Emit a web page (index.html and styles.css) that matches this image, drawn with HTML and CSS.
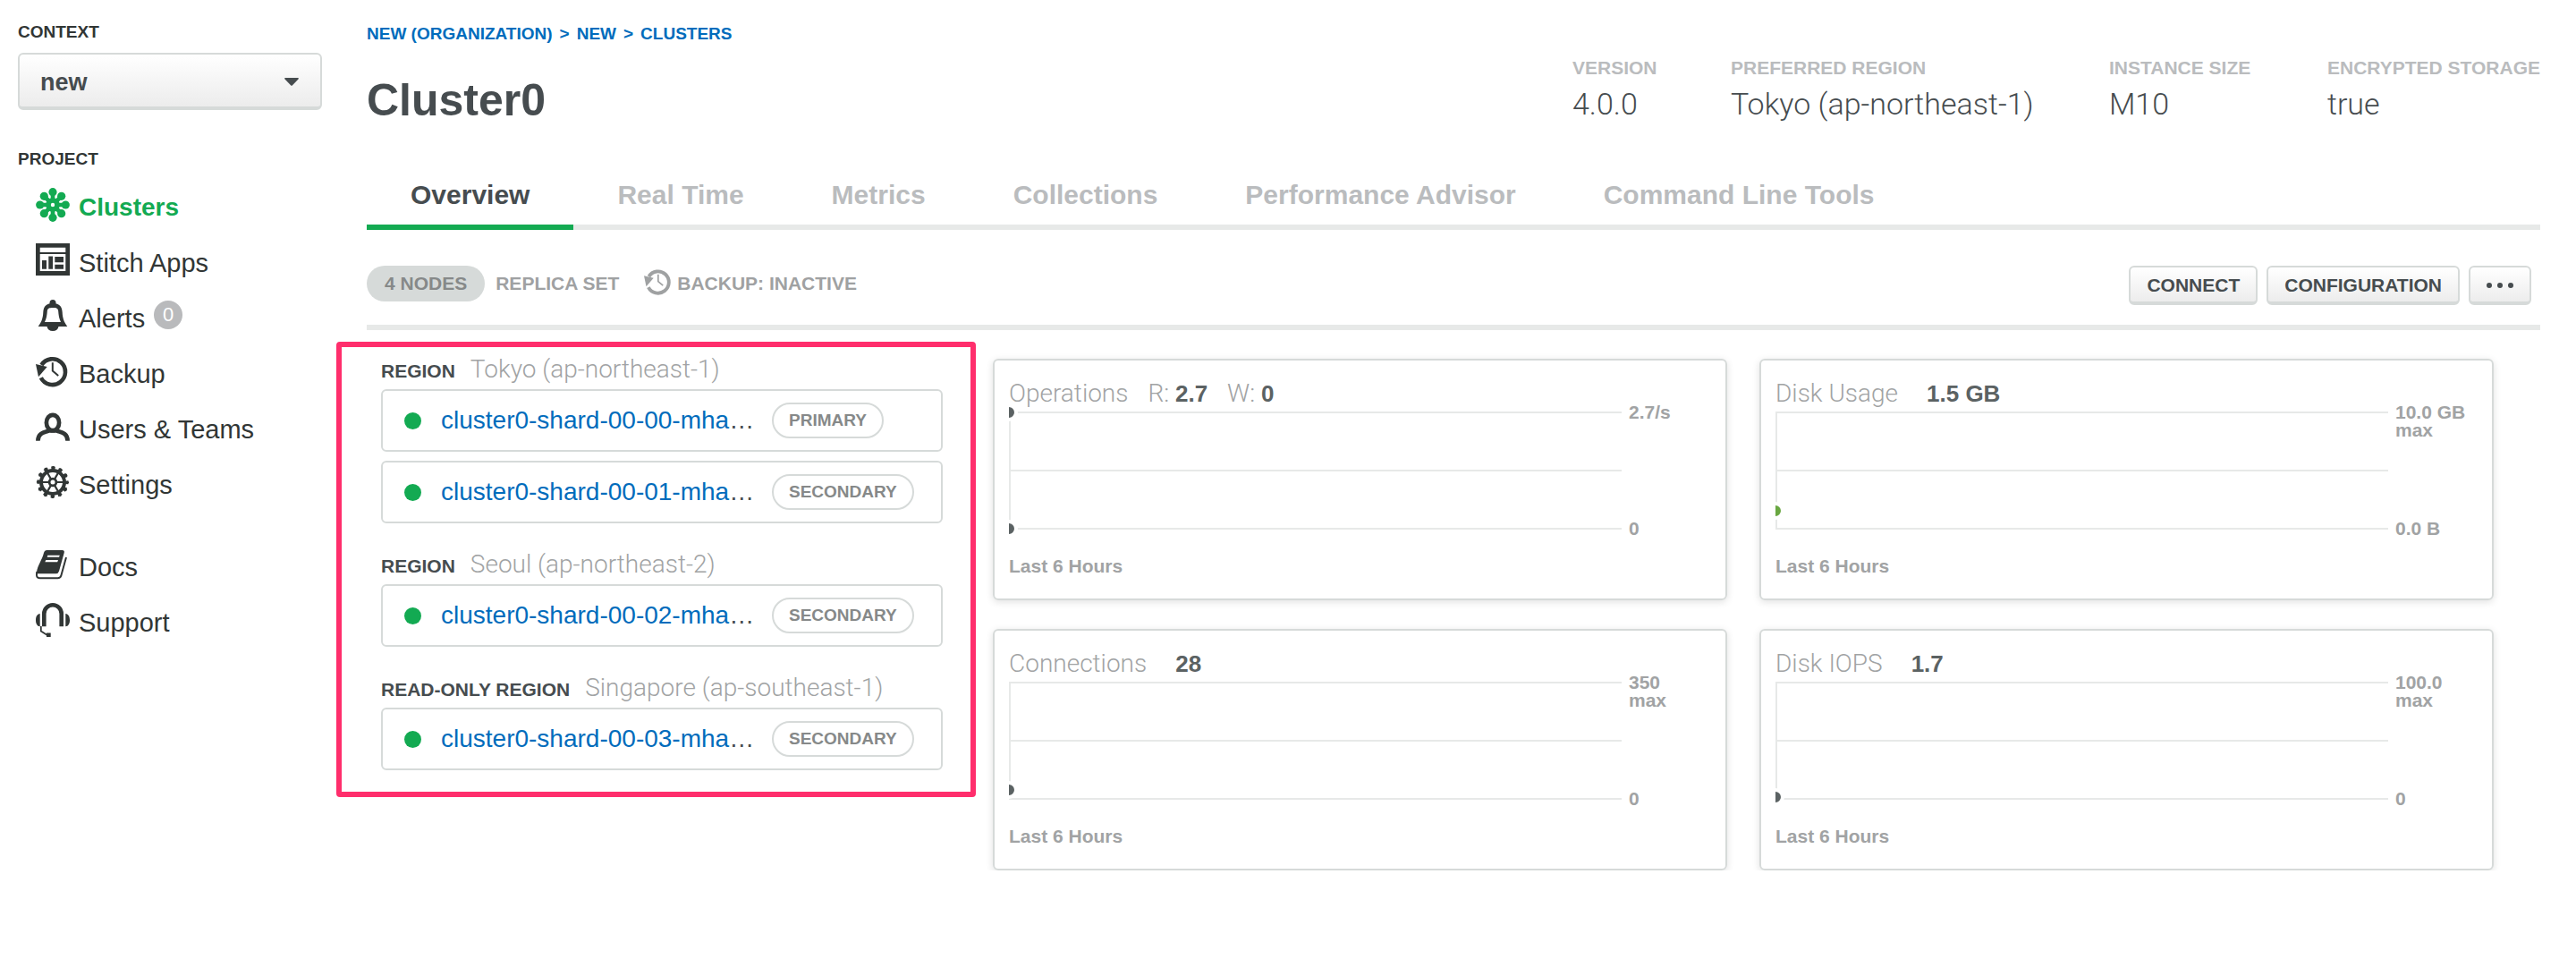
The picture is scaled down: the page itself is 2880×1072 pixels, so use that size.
FILE: index.html
```html
<!DOCTYPE html>
<html lang="en">
<head>
<meta charset="utf-8">
<title>Cluster0 - Overview</title>
<link rel="stylesheet" href="styles.css">
</head>
<body>
<svg class="defs" aria-hidden="true">
  <symbol id="i-history" viewBox="0 0 38 38">
    <path d="M5.8 26.2A14.4 14.4 0 1 0 6.4 12" fill="none" stroke="currentColor" stroke-width="4.6"/>
    <path d="M0 11L12.7 14L3 25.3Z" fill="currentColor"/>
    <path d="M18.8 9.3V18.5L25.2 24" fill="none" stroke="currentColor" stroke-width="2"/>
  </symbol>
</svg>
<div class="app">
  <aside class="sidebar">
    <label class="side-label" for="context">Context</label>
    <div class="select-wrap">
      <select id="context" class="context"><option>new</option></select>
      <svg class="caret" viewBox="0 0 16 9"><path d="M1 0H15Q16.500 0.500 15.500 1.500L9 8.300Q8 9.300 7 8.300L0.500 1.500Q-0.500 0.500 1 0Z" fill="#464c4f"/></svg>
    </div>
    <h2 class="side-label project">Project</h2>
    <nav class="nav">
      <a class="nav-item active" href="#">
        <svg class="icon" viewBox="0 0 38 38"><g fill="none" stroke="currentColor" stroke-width="4.600"><path d="M19 5V14.500M19 23.500V33M5 19H14.500M23.500 19H33M9.100 9.100L16 16M22 22L28.900 28.900M28.900 9.100L22 16M16 22L9.100 28.900"/><circle cx="19" cy="19" r="5" stroke-width="5.600"/></g><g fill="currentColor"><circle cx="19" cy="4.700" r="4.600"/><circle cx="19" cy="33.300" r="4.600"/><circle cx="4.700" cy="19" r="4.600"/><circle cx="33.300" cy="19" r="4.600"/><circle cx="9.300" cy="9.300" r="4.600"/><circle cx="28.700" cy="9.300" r="4.600"/><circle cx="9.300" cy="28.700" r="4.600"/><circle cx="28.700" cy="28.700" r="4.600"/></g></svg>
        Clusters</a>
      <a class="nav-item" href="#">
        <svg class="icon" viewBox="0 0 38 38"><path fill="currentColor" fill-rule="evenodd" d="M0 0H38V36H0ZM4.700 4.700H33.300V10H4.700ZM4.700 12H33.300V31H4.700Z"/><path fill="currentColor" d="M7 19H12V28.700H7ZM14.300 14.500H19V28.700H14.300ZM21.300 15H31V21.300H21.300ZM21.300 23.700H31V28.700H21.300Z"/></svg>
        Stitch Apps</a>
      <a class="nav-item" href="#">
        <svg class="icon" viewBox="0 0 38 38"><g fill="currentColor"><circle cx="19" cy="4.500" r="3.500"/><path fill-rule="evenodd" d="M2.700 31C7 25 8 21 8.300 15C8.600 7.500 13 5 19 5S29.400 7.500 29.700 15C30 21 31 25 35.300 31ZM10 26H28C26 22 25.500 18 25.200 14C25 10.500 23 10 19 10S13 10.500 12.800 14C12.500 18 12 22 10 26Z"/><path d="M12.500 31H25.500Q24.500 36 19 36T12.500 31Z"/></g></svg>
        Alerts <span class="count">0</span></a>
      <a class="nav-item" href="#">
        <svg class="icon"><use href="#i-history"/></svg>
        Backup</a>
      <a class="nav-item" href="#">
        <svg class="icon" viewBox="0 0 38 38"><g fill="none" stroke="currentColor" stroke-width="4.700"><ellipse cx="19" cy="14.500" rx="7.100" ry="8.700"/><path d="M2.400 34.700C2.400 27 8 25.500 12.500 24.200L14.500 23.500H23.500L25.500 24.200C30 25.500 35.600 27 35.600 34.700"/></g></svg>
        Users &amp; Teams</a>
      <a class="nav-item" href="#">
        <svg class="icon" viewBox="0 0 38 38"><g fill="none" stroke="currentColor"><circle cx="19" cy="19" r="13" stroke-width="4"/><circle cx="19" cy="19" r="3.900" stroke-width="2.800"/><circle cx="19" cy="19" r="15.800" stroke-width="3.400" stroke-dasharray="4.400 3.872" stroke-dashoffset="2.200"/><circle cx="19" cy="19" r="17.200" stroke-width="1.800" stroke-dasharray="2.400 6.605" stroke-dashoffset="1.200"/><path stroke-width="2.200" d="M6.500 19H14.500M23.500 19H31.500M12.750 8.200L16.750 15.100M21.250 22.900L25.250 29.800M25.250 8.200L21.250 15.100M16.750 22.900L12.750 29.800"/></g></svg>
        Settings</a>
      <a class="nav-item spaced" href="#">
        <svg class="icon" viewBox="0 0 38 38"><path fill="currentColor" fill-rule="evenodd" d="M12.500 3H29.500Q32.500 3 31.700 6L26 26.500Q25.200 29.200 22.500 29.200H2Q.5 29.200 1 27.500C2 20 7 14 9 6Q9.800 3 12.500 3ZM13.300 8.700L12.700 10.700H26L26.800 8.700ZM11.200 14L10.400 16.200H24.200L25 14Z"/><path fill="none" stroke="currentColor" stroke-width="2" d="M1.300 27C.3 32.500 1.500 34.300 4.500 34.300H24.500Q27.500 34.300 28.400 31.200L34 11"/></svg>
        Docs</a>
      <a class="nav-item" href="#">
        <svg class="icon" viewBox="0 0 38 38"><path fill="none" stroke="currentColor" stroke-width="4.600" d="M9.300 26.300V12A9.700 9.700 0 0 1 28.700 12V26.300"/><path fill="currentColor" d="M4.700 12V26.300C1.500 26 0 23 0 19.200S1.500 12.300 4.700 12ZM33.300 12V26.300C36.500 26 38 23 38 19.200S36.500 12.300 33.300 12ZM12 33.500H16.700V38H12Z"/><path fill="none" stroke="currentColor" stroke-width="1.800" d="M5.800 26V31.500L12.500 35.800"/></svg>
        Support</a>
    </nav>
  </aside>

  <main class="main">
    <header class="header">
      <div>
        <div class="crumbs"><a href="#">NEW (ORGANIZATION)</a><span>&gt;</span><a href="#">NEW</a><span>&gt;</span><a href="#">CLUSTERS</a></div>
        <h1 class="title">Cluster0</h1>
      </div>
      <dl class="facts">
        <div><dt>VERSION</dt><dd>4.0.0</dd></div>
        <div><dt>PREFERRED REGION</dt><dd>Tokyo (ap-northeast-1)</dd></div>
        <div><dt>INSTANCE SIZE</dt><dd>M10</dd></div>
        <div><dt>ENCRYPTED STORAGE</dt><dd>true</dd></div>
      </dl>
    </header>

    <nav class="tabs">
      <a class="tab current" href="#">Overview</a>
      <a class="tab" href="#">Real Time</a>
      <a class="tab" href="#">Metrics</a>
      <a class="tab" href="#">Collections</a>
      <a class="tab" href="#">Performance Advisor</a>
      <a class="tab" href="#">Command Line Tools</a>
    </nav>

    <div class="toolbar">
      <span class="pill">4 NODES</span>
      <span class="meta">REPLICA SET</span>
      <span class="meta backup"><svg class="meta-icon"><use href="#i-history"/></svg>BACKUP: INACTIVE</span>
      <div class="actions">
        <button class="btn" type="button">CONNECT</button>
        <button class="btn" type="button">CONFIGURATION</button>
        <button class="btn more" type="button" aria-label="More"><svg class="dots" viewBox="0 0 30 6"><g fill="currentColor"><circle cx="3" cy="3" r="3"/><circle cx="15" cy="3" r="3"/><circle cx="27" cy="3" r="3"/></g></svg></button>
      </div>
    </div>

    <div class="content">
      <section class="regions">
        <div class="region">
          <h3 class="region-head">REGION <span>Tokyo (ap-northeast-1)</span></h3>
          <div class="node"><i class="status"></i><div class="host"><a href="#">cluster0-shard-00-00-mha</a>…</div><span class="role">PRIMARY</span></div>
          <div class="node"><i class="status"></i><div class="host"><a href="#">cluster0-shard-00-01-mha</a>…</div><span class="role">SECONDARY</span></div>
        </div>
        <div class="region">
          <h3 class="region-head">REGION <span>Seoul (ap-northeast-2)</span></h3>
          <div class="node"><i class="status"></i><div class="host"><a href="#">cluster0-shard-00-02-mha</a>…</div><span class="role">SECONDARY</span></div>
        </div>
        <div class="region">
          <h3 class="region-head">READ-ONLY REGION <span>Singapore (ap-southeast-1)</span></h3>
          <div class="node"><i class="status"></i><div class="host"><a href="#">cluster0-shard-00-03-mha</a>…</div><span class="role">SECONDARY</span></div>
        </div>
      </section>

      <section class="charts">
        <article class="chart">
          <h3 class="chart-title"><span>Operations</span><span>R: <b>2.7</b></span><span>W: <b>0</b></span></h3>
          <div class="plot-row">
            <svg class="plot"><g class="grid"><path d="M1 10V140"/><line x1="0" x2="100%" y1="10" y2="10"/><line x1="0" x2="100%" y1="75" y2="75"/><line x1="0" x2="100%" y1="140" y2="140"/></g><circle class="dot" cx="0" cy="10" r="8"/><circle class="dot" cx="0" cy="140" r="8"/></svg>
            <div class="scale"><span>2.7/s</span><span>0</span></div>
          </div>
          <p class="span">Last 6 Hours</p>
        </article>
        <article class="chart">
          <h3 class="chart-title single"><span>Disk Usage</span><b>1.5 GB</b></h3>
          <div class="plot-row">
            <svg class="plot"><g class="grid"><path d="M1 10V140"/><line x1="0" x2="100%" y1="10" y2="10"/><line x1="0" x2="100%" y1="75" y2="75"/><line x1="0" x2="100%" y1="140" y2="140"/></g><circle class="dot green" cx="0" cy="120" r="8"/></svg>
            <div class="scale"><span>10.0 GB<br>max</span><span>0.0 B</span></div>
          </div>
          <p class="span">Last 6 Hours</p>
        </article>
        <article class="chart">
          <h3 class="chart-title single"><span>Connections</span><b>28</b></h3>
          <div class="plot-row">
            <svg class="plot"><g class="grid"><path d="M1 10V140"/><line x1="0" x2="100%" y1="10" y2="10"/><line x1="0" x2="100%" y1="75" y2="75"/><line x1="0" x2="100%" y1="140" y2="140"/></g><circle class="dot" cx="0" cy="130" r="8"/></svg>
            <div class="scale"><span>350<br>max</span><span>0</span></div>
          </div>
          <p class="span">Last 6 Hours</p>
        </article>
        <article class="chart">
          <h3 class="chart-title single"><span>Disk IOPS</span><b>1.7</b></h3>
          <div class="plot-row">
            <svg class="plot"><g class="grid"><path d="M1 10V140"/><line x1="0" x2="100%" y1="10" y2="10"/><line x1="0" x2="100%" y1="75" y2="75"/><line x1="0" x2="100%" y1="140" y2="140"/></g><circle class="dot" cx="0" cy="138" r="8"/></svg>
            <div class="scale"><span>100.0<br>max</span><span>0</span></div>
          </div>
          <p class="span">Last 6 Hours</p>
        </article>
      </section>
    </div>
  </main>
</div>
</body>
</html>
```
FILE: styles.css
```css
* { box-sizing: border-box; }

body {
  margin: 0;
  background: #fff;
  color: #464c4f;
  font-family: "Liberation Sans", Arial, sans-serif;
}

a { color: inherit; text-decoration: none; }
h1, h2, h3, p, dl, dd { margin: 0; }
svg { display: block; }
.defs { display: none; }

.app { display: grid; grid-template-columns: 376px minmax(0, 1fr); }

/* Sidebar */
.sidebar { display: flex; flex-direction: column; padding: 24px 16px 0 20px; }
.side-label {
  color: #313635;
  font-size: 19px;
  font-weight: 700;
  line-height: 24px;
  text-transform: uppercase;
}
.project { margin-top: 43px; }
.select-wrap { display: grid; align-items: center; margin-top: 11px; }
.select-wrap > * { grid-area: 1 / 1; }
.context {
  appearance: none;
  width: 100%;
  height: 64px;
  padding: 3px 23px 0;
  border: 2px solid #d6dad9;
  border-bottom-width: 4px;
  border-radius: 6px;
  background: linear-gradient(#fff, #ececec);
  color: #464c4f;
  font: 700 27px "Liberation Sans", Arial, sans-serif;
}
.caret { width: 16px; height: 9px; justify-self: end; margin-right: 26px; pointer-events: none; }

.nav { display: flex; flex-direction: column; margin-top: 11px; padding-left: 20px; }
.nav-item {
  display: flex;
  align-items: center;
  gap: 10px;
  height: 62px;
  color: #313635;
  font-size: 29px;
}
.nav-item.active { color: #13aa52; font-size: 28px; font-weight: 700; }
.nav-item.spaced { margin-top: 30px; }
.icon { width: 38px; height: 38px; margin-bottom: 6px; }
.count {
  width: 32px;
  height: 32px;
  margin-bottom: 8px;
  border-radius: 50%;
  background: #b9babc;
  color: #fff;
  font-size: 22px;
  line-height: 32px;
  text-align: center;
}

/* Header */
.main { min-width: 0; }
.header {
  display: flex;
  justify-content: space-between;
  padding: 26px 40px 0 34px;
}
.crumbs {
  display: flex;
  gap: 8px;
  color: #006cbc;
  font-size: 19px;
  font-weight: 700;
  line-height: 24px;
}
.title { margin-top: 32px; font-size: 50px; line-height: 60px; }
.facts {
  display: grid;
  grid-template-columns: 97px 343px 164px auto;
  gap: 80px;
  padding-top: 38px;
  white-space: nowrap;
}
.facts dt { color: #babcbe; font-size: 21px; font-weight: 700; line-height: 24px; }
.facts dd {
  margin-top: 8px;
  font-family: Roboto, sans-serif;
  font-size: 34px;
  font-weight: 300;
  line-height: 40px;
}

.tabs {
  display: flex;
  margin: 58px 40px 0 34px;
  box-shadow: inset 0 -6px #e7e9e8;
}
.tab {
  padding: 0 49px 15px;
  border-bottom: 6px solid transparent;
  color: #babcbe;
  font-size: 30px;
  font-weight: 700;
  line-height: 36px;
}
.tab.current { border-color: #13aa52; color: #464c4f; }

.toolbar {
  display: flex;
  align-items: flex-start;
  margin: 0 40px 0 34px;
  padding: 40px 10px 22px 0;
  border-bottom: 6px solid #e7e9e8;
  font-size: 21px;
  font-weight: 700;
  line-height: 40px;
}
.pill { padding: 0 20px; border-radius: 20px; background: #d6dad9; color: #868989; }
.meta { margin-left: 12px; color: #9fa1a2; }
.backup { display: flex; gap: 5px; margin-left: 28px; }
.meta-icon { width: 32px; height: 32px; margin-top: 2px; }
.actions { display: flex; gap: 10px; margin-left: auto; }
.btn {
  height: 44px;
  padding: 1px 18px 0;
  border: 2px solid #d6dad9;
  border-bottom-width: 4px;
  border-radius: 6px;
  background: linear-gradient(#fff, #ececec);
  color: #464c4f;
  font: 700 21px "Liberation Sans", Arial, sans-serif;
}
.dots { width: 30px; height: 6px; }

/* Nodes by region */
.content {
  display: grid;
  grid-template-columns: 715px minmax(0, 1fr);
  gap: 19px;
  align-items: start;
  padding: 13px 92px 0 0;
}
.regions {
  display: flex;
  flex-direction: column;
  gap: 30px;
  padding: 9px 31px 24px 44px;
  border: 6px solid #ff2e6c;
  border-radius: 4px;
}
.region { display: flex; flex-direction: column; gap: 10px; }
.region-head {
  display: flex;
  align-items: baseline;
  gap: 17px;
  height: 32px;
  margin-bottom: -4px;
  font-size: 21px;
  line-height: 32px;
}
.region-head span {
  color: #a1a3a4;
  font-family: Roboto, sans-serif;
  font-size: 28px;
  font-weight: 300;
}
.node {
  display: flex;
  align-items: center;
  height: 70px;
  padding: 0 24px;
  border: 2px solid #d6dad9;
  border-radius: 6px;
}
.status { width: 19px; height: 19px; border-radius: 50%; background: #13aa52; }
.host { width: 370px; margin-left: 22px; font-size: 28px; }
.host a { color: #006cbc; }
.role {
  padding: 0 17px;
  border: 2px solid #d6dad9;
  border-radius: 20px;
  color: #868989;
  font-size: 19px;
  font-weight: 700;
  line-height: 36px;
}

/* Charts */
.charts {
  display: grid;
  grid-template-columns: 1fr 1fr;
  gap: 32px 36px;
  margin-top: 19px;
}
.chart {
  padding: 25px 16px 24px;
  border: 2px solid #d6dad9;
  border-radius: 6px;
  box-shadow: 0 2px 8px rgba(0, 0, 0, .12);
}
.chart-title {
  display: flex;
  gap: 22px;
  height: 23px;
  color: #a1a3a4;
  font-family: Roboto, sans-serif;
  font-size: 28px;
  font-weight: 300;
  line-height: 24px;
}
.chart-title.single { gap: 32px; }
.chart-title b {
  color: #5b6263;
  font-family: "Liberation Sans", Arial, sans-serif;
  font-size: 26px;
  font-weight: 700;
}
.plot-row { display: grid; grid-template-columns: minmax(0, 1fr) 92px; gap: 8px; }
.plot { width: 100%; height: 150px; overflow: hidden; }
.grid { stroke: #e7e9e8; stroke-width: 2; }
.dot { fill: #5b6263; stroke: #fff; stroke-width: 4; }
.dot.green { fill: #69a741; }
.scale {
  display: flex;
  flex-direction: column;
  justify-content: space-between;
  color: #a1a3a4;
  font-size: 21px;
  font-weight: 700;
  line-height: 20px;
}
.span { margin-top: 20px; color: #a1a3a4; font-size: 21px; font-weight: 700; line-height: 24px; }
```
